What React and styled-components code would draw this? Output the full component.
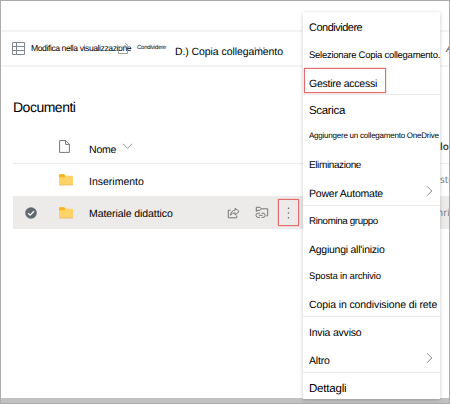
import React from "react";
import styled, { createGlobalStyle } from "styled-components";

const GlobalStyle = createGlobalStyle`
  * { box-sizing: border-box; }
  body { margin: 0; background: #fff; font-family: "Liberation Sans", Arial, sans-serif; color: #000; text-rendering: geometricPrecision; }
`;

const Window = styled.div`
  position: relative;
  display: flex;
  flex-direction: column;
  width: 450px;
  height: 404px;
  overflow: hidden;
  background: #fff;
  border: 1px solid #ababab;
`;

const TopBar = styled.header`
  flex: none;
  height: 31px;
  border-bottom: 2px solid #f3f3f3;
`;

const Toolbar = styled.nav`
  position: relative;
  flex: none;
  display: flex;
  align-items: center;
  height: 35px;
  padding-left: 11px;
  border-bottom: 2px solid #f3f3f3;
  svg { flex: none; }
`;

const Text = styled.span`
  flex: none;
  white-space: nowrap;
  line-height: 14px;
  font-size: ${(p) => p.$size}px;
  letter-spacing: ${(p) => p.$track || 0}px;
  padding-top: ${(p) => Math.max(p.$drop || 0, 0)}px;
  padding-bottom: ${(p) => Math.max(-(p.$drop || 0), 0)}px;
`;

const ViewLabel = styled(Text)`
  width: 106px;
  margin-left: 6px;
`;

const ShareLabel = styled(Text)`
  width: 38px;
`;

const ShareGhost = styled.svg`
  position: absolute;
  left: 116px;
  top: 9px;
`;

const CopyGhost = styled.svg`
  position: absolute;
  left: 252px;
  top: 15px;
`;

const ClippedAction = styled.span`
  position: absolute;
  left: 445px;
  top: 10px;
  font-size: 11px;
  font-style: italic;
  line-height: 14px;
  color: #555;
`;

const Library = styled.main`
  flex: 1;
  padding: 32px 0 0 12px;
`;

const Heading = styled.h1`
  margin: 0;
  height: 31px;
  font-size: 14px;
  font-weight: 400;
  line-height: 17px;
  letter-spacing: -0.5px;
`;

const Row = styled.div`
  display: grid;
  grid-template-columns: 46px 30px 112px 1fr 22px;
  align-items: center;
  height: ${(p) => (p.$selected ? 33 : 32)}px;
  background: ${(p) => (p.$selected ? "#edebe9" : "transparent")};
`;

const HeaderRow = styled(Row)`
  height: 34px;
  border-bottom: 1px solid #ececec;
`;

const Cell = styled.div`
  display: flex;
  align-items: center;
  gap: ${(p) => p.$gap || 0}px;
  padding-left: ${(p) => p.$indent || 0}px;
`;

const ClippedCell = styled.div`
  padding-left: ${(p) => p.$indent || 0}px;
  padding-bottom: 2px;
  overflow: hidden;
  font-size: 10px;
  line-height: 14px;
  font-family: "Open Sans", sans-serif;
  font-weight: ${(p) => (p.$bold ? 600 : 400)};
  color: ${(p) => (p.$bold ? "#333" : "#777")};
`;

const MoreButton = styled.button`
  display: flex;
  align-items: center;
  justify-content: center;
  width: 21px;
  height: 27px;
  margin-left: 9px;
  padding: 0;
  background: transparent;
  border: 1px solid #e56a6d;
  box-shadow: 0 0 1px #e56a6d;
`;

const StatusStrip = styled.footer`
  flex: none;
  height: 5px;
  background: #c1c1c1;
`;

const Menu = styled.div`
  position: absolute;
  left: 302px;
  top: 11px;
  width: 137px;
  height: 387px;
  padding-top: 1px;
  background: #fff;
  box-shadow: 0 1px 4px rgba(0, 0, 0, 0.22);
`;

const MenuSection = styled.div`
  & + & { border-top: 1px solid #eaeaea; }
`;

const MenuItem = styled.div`
  position: relative;
  display: flex;
  align-items: center;
  justify-content: space-between;
  height: ${(p) => (p.$compact ? 27 : 27.5)}px;
  padding: 0 7px 0 6px;
`;

const Highlight = styled.div`
  position: absolute;
  left: 1px;
  top: 1px;
  width: 82px;
  height: 25px;
  border: 1px solid #e56a6d;
  box-shadow: 0 0 1px #e56a6d;
`;

const Line = styled.svg.attrs({ fill: "none" })`
  flex: none;
  display: block;
  stroke: ${(p) => p.$color || "#777"};
`;

const Chevron = () => (
  <Line width="7" height="12" viewBox="0 0 7 12" $color="#888">
    <path d="M1 1.2 5.8 6 1 10.8" />
  </Line>
);

const Folder = () => (
  <Line as="svg" width="14" height="12" viewBox="0 0 14 12" $color="none">
    <path d="M0 1.2Q0 .3 .9 .3H5L6.6 1.8H13.1Q14 1.8 14 2.7V11H0Z" fill="#ffd368" />
    <path d="M0 1.2Q0 .3 .9 .3H5L6.6 1.8 5.3 3.2H0Z" fill="#f9b21b" />
    <path d="M0 10.6H14V11.4H0Z" fill="#e9b66b" />
  </Line>
);

const ShareIcon = () => (
  <Line width="13" height="12" viewBox="0 0 13 12">
    <path d="M3.6 3.2H1.3V10.8H9.8V8.5M8.2 1.2 12.1 4.6 8.2 8V5.9Q5 5.8 3.4 8.2 4 3.5 8.2 3.2Z" />
  </Line>
);

const LinkFolderIcon = () => (
  <Line width="14" height="13" viewBox="0 0 14 13">
    <path d="M1.3 6V1.3H5L6.3 2.8H12.7V9.8H11.3M1.3 4.4H5L6.3 2.8M5 7.2H3.2Q1 7.2 1 9.3T3.2 11.4H5M6.5 7.2H8Q10.2 7.2 10.2 9.3T8 11.4H6.5M3.8 9.3H7.5" />
  </Line>
);

const menu = [
  [
    { text: "Condividere", size: 11, track: -0.5, drop: 3 },
    { text: "Selezionare Copia collegamento.", size: 9.5, track: -0.27, drop: 4 },
    { text: "Gestire accessi", size: 10.5, track: -0.25, drop: 6 },
  ],
  [
    { text: "Scarica", size: 11.5, track: -0.33, drop: 4 },
    { text: "Aggiungere un collegamento OneDrive", size: 8, track: -0.23, drop: 0 },
    { text: "Eliminazione", size: 10, track: -0.39, drop: 5 },
    { text: "Power Automate", size: 10.5, track: -0.22, drop: 5, more: true },
  ],
  [
    { text: "Rinomina gruppo", size: 9.8, track: -0.38, drop: 5 },
    { text: "Aggiungi all'inizio", size: 10.5, track: -0.25, drop: 5 },
    { text: "Sposta in archivio", size: 9.5, track: -0.17, drop: 5 },
    { text: "Copia in condivisione di rete", size: 10.5, track: -0.11, drop: 5 },
  ],
  [
    { text: "Invia avviso", size: 10.5, track: -0.2, drop: 5 },
    { text: "Altro", size: 10.5, track: -0.2, drop: 5, more: true },
  ],
  [{ text: "Dettagli", size: 11.5, track: -0.2, drop: 4 }],
];

export default function App() {
  return (
    <Window>
      <GlobalStyle />
      <TopBar />
      <Toolbar>
        <Line width="13" height="13" viewBox="0 0 13 13" $color="#7d898e">
          <path d="M.5.5H12.5V12.5H.5ZM.5 4.5H12.5M.5 8.5H12.5M4.5.5V12.5" />
        </Line>
        <ViewLabel $size={8.6} $track={-0.42} $drop={-2}>Modifica nella visualizzazione</ViewLabel>
        <ShareGhost width="13" height="13" viewBox="0 0 13 13" fill="none" stroke="#9a9fa2">
          <path d="M4 5.5H1.5V12.5H10.5V9M5 8Q5.5 4.5 8.5 4.5M8 2 11 4.5 8 7" />
        </ShareGhost>
        <ShareLabel $size={6} $track={-0.27} $drop={-2}>Condividere</ShareLabel>
        <Text $size={10.5} $track={-0.08} $drop={6}>D.) Copia collegamento</Text>
        <CopyGhost width="13" height="4" viewBox="0 0 13 4" stroke="#888" fill="none">
          <path d="M1 1H3M6 1H7.5M10 1H12" />
        </CopyGhost>
        <ClippedAction>A</ClippedAction>
      </Toolbar>
      <Library>
        <Heading>Documenti</Heading>
        <HeaderRow>
          <span />
          <Line width="11" height="13" viewBox="0 0 11 13" $color="#777">
            <path d="M.6.6H6.8L10.4 4.2V12.4H.6ZM6.6.6V4.4H10.4" />
          </Line>
          <Cell $gap={6}>
            <Text $size={10.5} $track={-0.2} $drop={7}>Nome</Text>
            <Line width="11" height="9" viewBox="0 0 11 9" $color="#999">
              <path d="M1 1.8 5.5 6.3 10 1.8" />
            </Line>
          </Cell>
          <span />
          <ClippedCell $bold $indent={13}>lo</ClippedCell>
        </HeaderRow>
        <Row>
          <span />
          <Folder />
          <Cell><Text $size={10.5} $drop={3}>Inserimento</Text></Cell>
          <span />
          <ClippedCell $indent={8}>yste</ClippedCell>
        </Row>
        <Row $selected>
          <Cell $indent={12}>
            <svg width="12" height="12" viewBox="0 0 12 12">
              <circle cx="6" cy="6" r="5.8" fill="#5f6b70" />
              <path d="M3.2 6.2 5.2 8.1 8.9 4.3" fill="none" stroke="#fff" strokeWidth="1.3" />
            </svg>
          </Cell>
          <Folder />
          <Cell><Text $size={10.5} $track={-0.08} $drop={3}>Materiale didattico</Text></Cell>
          <Cell $indent={26}>
            <ShareIcon />
            <Cell $indent={15}><LinkFolderIcon /></Cell>
            <MoreButton aria-label="Altro">
              <svg width="3" height="12" viewBox="0 0 3 12" fill="#666">
                <circle cx="1.5" cy="1.2" r=".8" />
                <circle cx="1.5" cy="6" r=".8" />
                <circle cx="1.5" cy="10.8" r=".8" />
              </svg>
            </MoreButton>
          </Cell>
          <ClippedCell $indent={10}>nri</ClippedCell>
        </Row>
      </Library>
      <StatusStrip />
      <Menu>
        {menu.map((section, i) => (
          <MenuSection key={i}>
            {section.map((item) => (
              <MenuItem key={item.text} $compact={i === 0}>
                {item.text === "Gestire accessi" && <Highlight />}
                <Text $size={item.size} $track={item.track} $drop={item.drop}>{item.text}</Text>
                {item.more && <Chevron />}
              </MenuItem>
            ))}
          </MenuSection>
        ))}
      </Menu>
    </Window>
  );
}
